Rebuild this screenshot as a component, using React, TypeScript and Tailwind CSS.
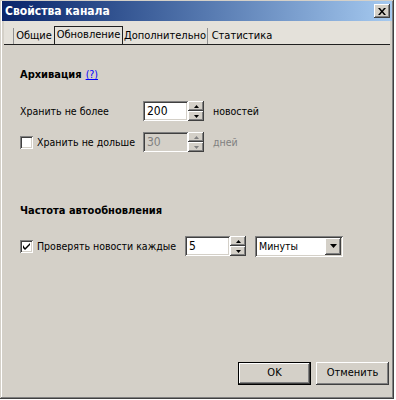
import React from "react";

const font = { fontFamily: '"DejaVu Sans Condensed", "DejaVu Sans", "Liberation Sans", sans-serif' };

function Sunken({ children, className = "" }: { children?: React.ReactNode; className?: string }) {
  return (
    <div
      className={
        "shadow-[inset_1px_1px_#808080,inset_-1px_-1px_#ffffff,inset_2px_2px_#404040,inset_-2px_-2px_#d4d0c8] " +
        className
      }
    >
      {children}
    </div>
  );
}

function Arrow({ dir, disabled }: { dir: "up" | "down"; disabled?: boolean }) {
  const c = disabled ? "#808080" : "#000";
  return (
    <svg width="5" height="3" viewBox="0 0 5 3">
      {dir === "up" ? <polygon points="2.5,0 5,3 0,3" fill={c} /> : <polygon points="0,0 5,0 2.5,3" fill={c} />}
    </svg>
  );
}

function SpinBtn({ dir, disabled }: { dir: "up" | "down"; disabled?: boolean }) {
  return (
    <div className="flex-1 flex items-center justify-center bg-[#d4d0c8] shadow-[inset_-1px_-1px_#404040,inset_1px_1px_#ffffff,inset_-2px_-2px_#808080]">
      <Arrow dir={dir} disabled={disabled} />
    </div>
  );
}

function Spin({ value, disabled }: { value: string; disabled?: boolean }) {
  return (
    <div className="flex h-[20px]">
      <Sunken className={"w-[45px] h-[20px] flex items-center pl-[4px] " + (disabled ? "bg-[#d4d0c8] text-[#808080]" : "bg-white text-black")}>
        <span className="text-[12px] leading-none">{value}</span>
      </Sunken>
      <div className="w-[16px] h-[20px] flex flex-col">
        <SpinBtn dir="up" disabled={disabled} />
        <SpinBtn dir="down" disabled={disabled} />
      </div>
    </div>
  );
}

function Checkbox({ checked }: { checked?: boolean }) {
  return (
    <Sunken className="w-[13px] h-[13px] bg-white flex items-center justify-center shrink-0">
      {checked && (
        <svg width="7" height="7" viewBox="0 0 7 7">
          <path d="M0 2 L0 5 L2 7 L7 2 L7 0 L2 5 Z" fill="#000" />
        </svg>
      )}
    </Sunken>
  );
}

function Button({ label, def }: { label: string; def?: boolean }) {
  return (
    <div
      className={
        "w-[73px] h-[23px] flex items-center justify-center text-[11px] text-black bg-[#d4d0c8] " +
        (def
          ? "shadow-[inset_0_0_0_1px_#000,inset_-2px_-2px_#404040,inset_2px_2px_#ffffff,inset_-3px_-3px_#808080]"
          : "shadow-[inset_-1px_-1px_#404040,inset_1px_1px_#ffffff,inset_-2px_-2px_#808080]")
      }
    >
      {label}
    </div>
  );
}

export default function App() {
  return (
    <div className="bg-white w-[396px] h-[400px]" style={font}>
      <div className="w-[394px] h-[399px] bg-[#d4d0c8] flex flex-col shadow-[inset_-1px_-1px_#404040,inset_1px_1px_#d4d0c8,inset_-2px_-2px_#808080,inset_2px_2px_#ffffff]">
        {/* Title bar */}
        <div className="mx-[2px] mt-[1px] h-[20px] flex items-center justify-between bg-gradient-to-r from-[#0a246a] to-[#a6caf0]">
          <span className="pl-[3px] text-white font-bold text-[12px] leading-none">Свойства канала</span>
          <div className="mr-[2px] w-[16px] h-[14px] bg-[#d4d0c8] flex items-center justify-center shadow-[inset_-1px_-1px_#404040,inset_1px_1px_#ffffff,inset_-2px_-2px_#808080]">
            <svg width="8" height="7" viewBox="0 0 8 7">
              <path d="M0 0 L2 0 L4 2.5 L6 0 L8 0 L5 3.5 L8 7 L6 7 L4 4.5 L2 7 L0 7 L3 3.5 Z" fill="#000" />
            </svg>
          </div>
        </div>

        {/* Tabs */}
        <div className="mx-[4px] h-[24px] bg-[#e4e1da] flex items-end pl-[9px] border-b border-[#202020]">
          <div className="h-[16px] w-[41px] flex items-center justify-center text-[11px] text-black border-l border-[#909090]">Общие</div>
          <div className="h-[18px] w-[69px] flex items-center justify-center text-[11px] text-black border-t border-l border-r border-[#202020] bg-[#e4e1da]">Обновление</div>
          <div className="h-[16px] w-[85px] flex items-center justify-center text-[11px] text-black border-r border-[#909090]">Дополнительно</div>
          <div className="h-[16px] w-[68px] flex items-center justify-center text-[11px] text-black">Статистика</div>
        </div>

        {/* Content */}
        <div className="flex flex-col pl-[20px] text-[10.5px] text-black leading-[13px]">
          <div className="mt-[23px] flex items-center gap-[4px]">
            <span className="font-bold text-[11px]">Архивация</span>
            <span className="text-[#0000ff] underline">(?)</span>
          </div>

          <div className="mt-[20px] flex items-center h-[20px]">
            <span className="w-[123px]">Хранить не более</span>
            <Spin value="200" />
            <span className="ml-[9px]">новостей</span>
          </div>

          <div className="mt-[11px] flex items-center h-[20px]">
            <div className="w-[123px] flex items-center gap-[4px]">
              <Checkbox />
              <span>Хранить не дольше</span>
            </div>
            <Spin value="30" disabled />
            <span className="ml-[9px] text-[#808080]">дней</span>
          </div>

          <div className="mt-[52px] font-bold text-[11px]">Частота автообновления</div>

          <div className="mt-[19px] flex items-center h-[20px]">
            <div className="w-[165px] flex items-center gap-[4px]">
              <Checkbox checked />
              <span>Проверять новости каждые</span>
            </div>
            <Spin value="5" />
            <Sunken className="ml-[9px] w-[88px] h-[21px] bg-white flex items-center justify-between pl-[4px] pr-[2px]">
              <span>Минуты</span>
              <div className="w-[16px] h-[17px] bg-[#d4d0c8] flex items-center justify-center shadow-[inset_-1px_-1px_#404040,inset_1px_1px_#ffffff,inset_-2px_-2px_#808080]">
                <svg width="7" height="4" viewBox="0 0 7 4">
                  <polygon points="0,0 7,0 3.5,4" fill="#000" />
                </svg>
              </div>
            </Sunken>
          </div>
        </div>

        <div className="mt-auto mb-[14px] flex justify-end gap-[5px] pr-[5px]">
          <Button label="OK" def />
          <Button label="Отменить" />
        </div>
      </div>
    </div>
  );
}
